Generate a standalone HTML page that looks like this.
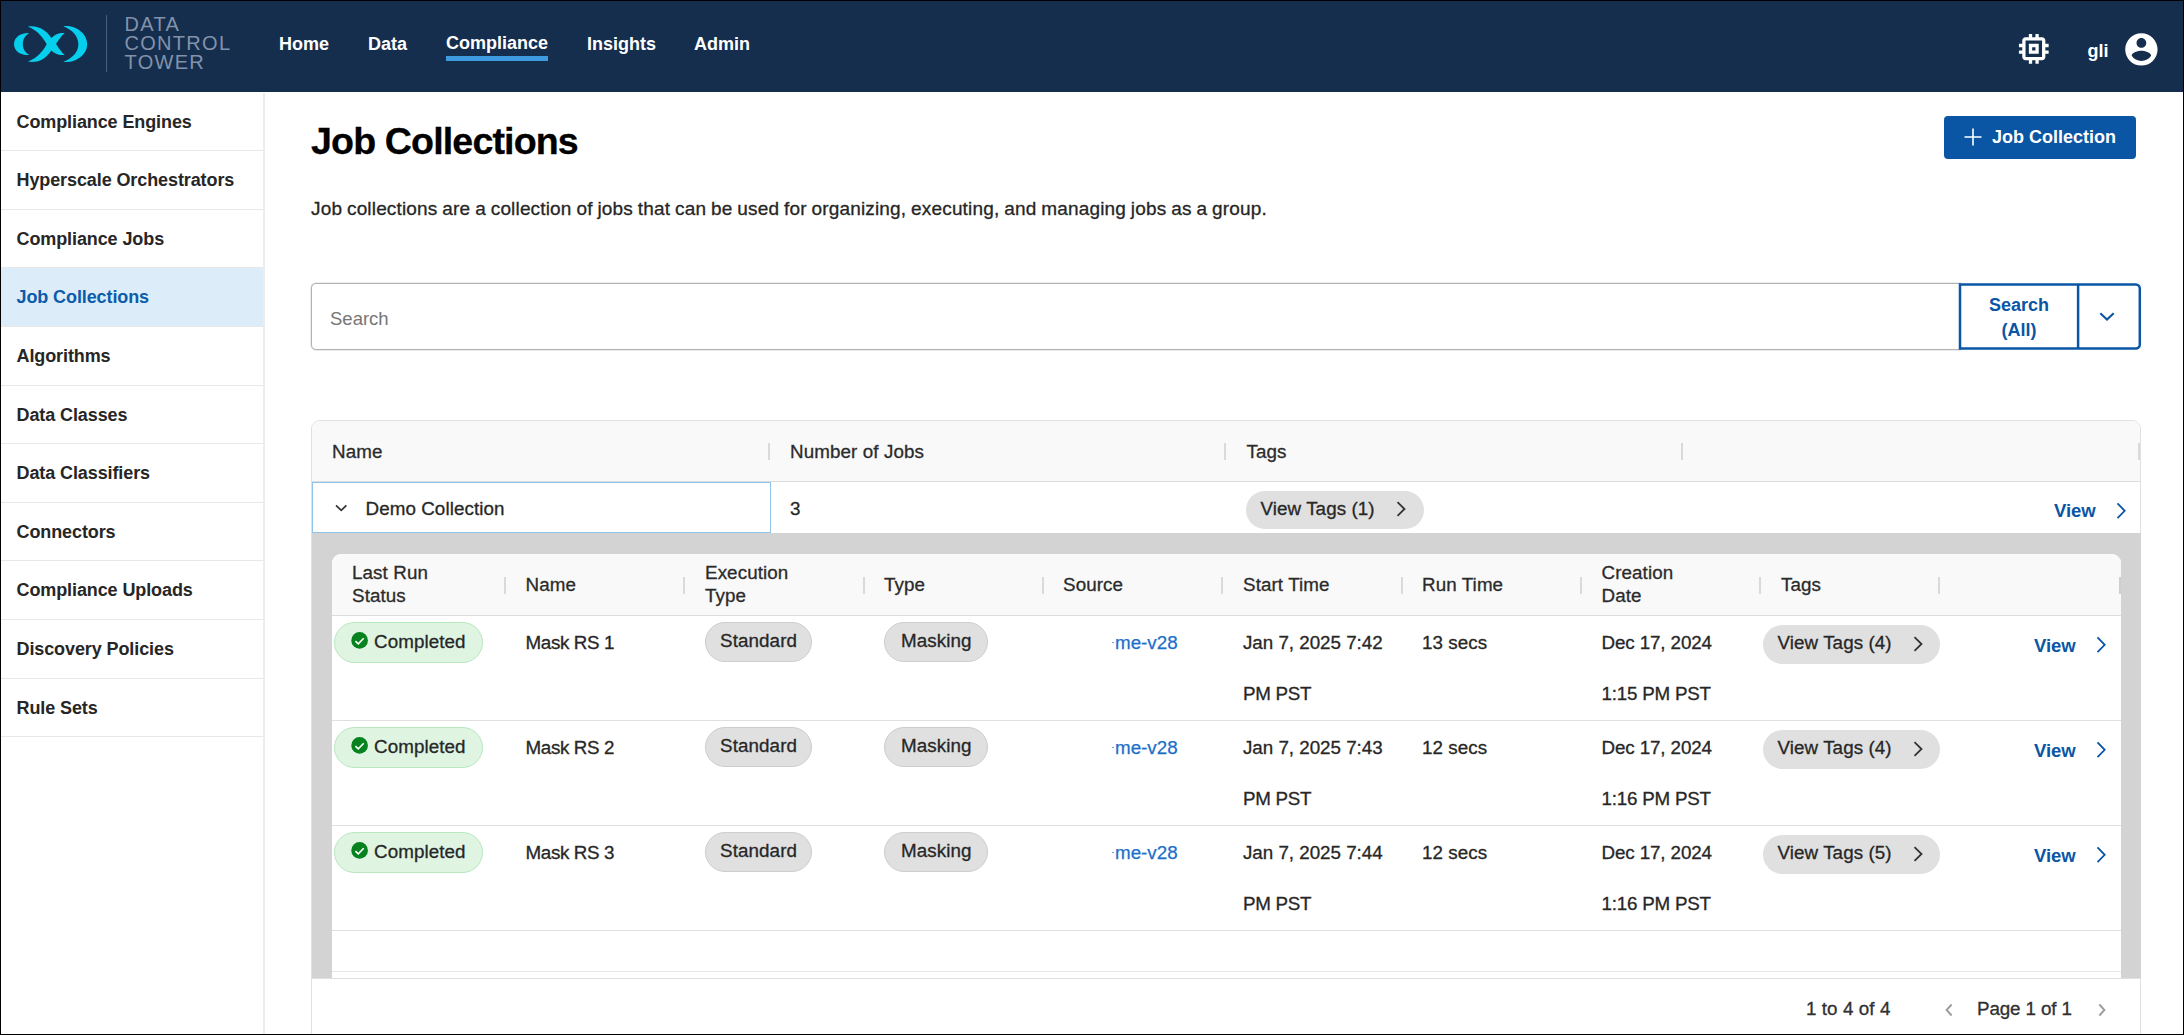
<!DOCTYPE html>
<html>
<head>
<meta charset="utf-8">
<title>Job Collections</title>
<style>
*{box-sizing:border-box;margin:0;padding:0}
html,body{width:2184px;height:1035px;overflow:hidden;background:#fff;font-family:"Liberation Sans",sans-serif}
body{font-family:"Liberation Sans",sans-serif;color:#222;position:relative;font-size:19px}
.abs{position:absolute}
.t{position:absolute;white-space:nowrap;line-height:1}
#frame{position:absolute;left:0;top:0;width:2184px;height:1035px;border:1px solid #000;z-index:100;pointer-events:none}
/* header */
#hdr{position:absolute;left:0;top:0;width:2184px;height:91.5px;background:#152e4e}
.nav{position:absolute;top:34px;color:#fff;font-weight:700;font-size:18px;line-height:20px;white-space:nowrap}
.brand{position:absolute;left:124.5px;color:#8292aa;font-size:20px;letter-spacing:1.3px;line-height:19px;white-space:nowrap}
/* sidebar */
#side{position:absolute;left:0;top:92.7px;width:264.5px;height:944px;border-right:2px solid #ececec;background:#fff}
.si{position:absolute;left:0;width:262.5px;height:58.6px;border-bottom:1.5px solid #e8e8e8;font-weight:700;font-size:18px;line-height:58.6px;padding-left:16.5px;color:#262626;letter-spacing:-0.1px;white-space:nowrap}
.si.act{background:#dcedf9;color:#0b5cab}

/* main */
#title{position:absolute;left:311px;top:118.8px;font-weight:700;font-size:37.6px;line-height:44px;letter-spacing:-0.86px;color:#000;white-space:nowrap;-webkit-text-stroke:0.3px #000}
#addbtn{position:absolute;left:1944px;top:116px;width:192px;height:42.5px;background:#0b55a5;border-radius:4px;color:#fff;font-weight:700;font-size:18px}
#desc{position:absolute;left:311px;top:198px;font-size:19px;line-height:22px;color:#262626;white-space:nowrap;letter-spacing:0.165px;word-spacing:-0.6px;-webkit-text-stroke:0.3px #262626}
#sbox{position:absolute;left:311px;top:283px;width:1650px;height:66.6px;border:1px solid #b2b2b2;border-radius:5px 0 0 5px;background:#fff;box-shadow:0 0 0 0.5px #d9d9d9}
#sph{position:absolute;left:330px;top:307.5px;font-size:18.5px;line-height:22px;color:#767676;white-space:nowrap}
#sbtn{position:absolute;left:1958.8px;top:283.2px;width:120.5px;height:66.6px;color:#0b55a5;font-weight:700;font-size:18px;line-height:25px;text-align:center;padding-top:10px}


/* outer table */
#tbl{position:absolute;left:311px;top:419.5px;width:1830px;height:640px;border:1px solid #e0e0e0;border-radius:9px;background:#fff;overflow:hidden}
#thead{position:absolute;left:0;top:0;width:100%;height:61.5px;background:#f9f9f9;border-bottom:1.5px solid #dddddd}
.hsep{position:absolute;width:2px;background:#dadada}
.ht{position:absolute;white-space:nowrap;font-size:18.8px;line-height:22.5px;color:#2b2b2b;letter-spacing:0.1px;-webkit-text-stroke:0.3px #2b2b2b}
.ct{position:absolute;white-space:nowrap;font-size:18.8px;line-height:22px;color:#272727;letter-spacing:0.08px;-webkit-text-stroke:0.3px #272727}
.pill{position:absolute;border-radius:20px;background:#e0e0e0;white-space:nowrap;font-size:18.8px;color:#222}
.view{position:absolute;white-space:nowrap;font-weight:700;font-size:18.5px;margin-left:-0.6px;line-height:22px;color:#0b55a5}
#detail{position:absolute;left:312px;top:533px;width:1828.6px;height:445px;background:#d3d3d3}
#inner{position:absolute;left:332px;top:554px;width:1788.7px;height:424px;background:#fff;border-radius:9px 9px 0 0;overflow:hidden}
#ihead{position:absolute;left:0;top:0;width:100%;height:62px;background:#f9f9f9;border-bottom:1.5px solid #dddddd}
.rline{position:absolute;left:0;width:100%;height:1px;background:#dfdfdf}
.ok{position:absolute;border-radius:21px;background:#dff5e2;border:1px solid #b7e8be;height:41px}
.gp{position:absolute;border-radius:21px;background:#e0e0e0;border:1px solid #cdcdcd;height:40.6px;text-align:center;font-size:18.8px;line-height:36.9px;color:#272727;letter-spacing:0.1px;-webkit-text-stroke:0.3px #272727}
.lnk{position:absolute;white-space:nowrap;font-size:18.8px;line-height:22px;color:#1c6fc9;-webkit-text-stroke:0.25px #1c6fc9}
#foot{position:absolute;left:312px;top:978px;width:1828px;height:58px;background:#fff;border-top:1px solid #e0e0e0}
</style>
</head>
<body>
<div id="hdr">
  <!-- logo -->
  <svg class="abs" style="left:8px;top:18px" width="90" height="52" viewBox="0 0 1791 1035">
    <g fill="#06cfee">
      <path d="M420 300 C330 282 120 340 120 520 C120 700 330 752 425 735 C340 690 295 610 295 520 C295 430 340 350 420 300 Z"/>
      <path d="M395 168 C600 135 770 240 870 410 L960 520 C1010 600 1070 690 1130 735 C1010 750 910 700 850 630 L770 520 C700 400 600 250 395 168 Z"/>
      <path d="M1130 300 C1000 285 910 340 850 420 L770 520 C700 650 590 790 395 868 C600 905 770 800 870 630 L960 510 C1010 430 1060 360 1130 300 Z"/>
      <path d="M1100 165 C1300 130 1575 280 1575 520 C1575 760 1300 905 1100 870 C1280 800 1400 680 1400 520 C1400 360 1280 235 1100 165 Z"/>
    </g>
  </svg>
  <div class="abs" style="left:105.5px;top:15px;width:1.5px;height:57px;background:#4a5d7a"></div>
  <div class="brand" style="top:14.8px">DATA</div>
  <div class="brand" style="top:34px">CONTROL</div>
  <div class="brand" style="top:53.3px">TOWER</div>
  <div class="nav" style="left:279px">Home</div>
  <div class="nav" style="left:368px">Data</div>
  <div class="nav" style="left:446px;top:33px">Compliance</div>
  <div class="abs" style="left:446px;top:55.8px;width:102px;height:5px;background:#3f9be0"></div>
  <div class="nav" style="left:587px">Insights</div>
  <div class="nav" style="left:694px">Admin</div>
  <!-- chip icon -->
  <svg class="abs" style="left:2013.55px;top:29.05px" width="39.6" height="39.6" viewBox="0 0 24 24" fill="#fff"><path d="M15 9H9v6h6V9zm-2 4h-2v-2h2v2zm8-2V9h-2V7c0-1.1-.9-2-2-2h-2V3h-2v2h-2V3H9v2H7c-1.1 0-2 .9-2 2v2H3v2h2v2H3v2h2v2c0 1.1.9 2 2 2h2v2h2v-2h2v2h2v-2h2c1.1 0 2-.9 2-2v-2h2v-2h-2v-2h2zm-4 6H7V7h10v10z"/></svg>
  <div class="nav" style="left:2087.5px;top:41.2px;font-size:18px">gli</div>
  <!-- avatar -->
  <svg class="abs" style="left:2122.4px;top:29.65px" width="38.8" height="38.8" viewBox="0 0 24 24" fill="#fff"><path d="M12 2C6.48 2 2 6.48 2 12s4.48 10 10 10 10-4.48 10-10S17.52 2 12 2zm0 3c1.66 0 3 1.34 3 3s-1.34 3-3 3-3-1.34-3-3 1.34-3 3-3zm0 14.2c-2.5 0-4.71-1.28-6-3.22.03-1.99 4-3.08 6-3.08 1.99 0 5.97 1.09 6 3.08-1.29 1.94-3.5 3.22-6 3.22z"/></svg>
</div>

<div id="side">
  <div class="si" style="top:0">Compliance Engines</div>
  <div class="si" style="top:58.6px">Hyperscale Orchestrators</div>
  <div class="si" style="top:117.2px">Compliance Jobs</div>
  <div class="si act" style="top:175.8px">Job Collections</div>
  <div class="si" style="top:234.4px">Algorithms</div>
  <div class="si" style="top:293px">Data Classes</div>
  <div class="si" style="top:351.6px">Data Classifiers</div>
  <div class="si" style="top:410.2px">Connectors</div>
  <div class="si" style="top:468.8px">Compliance Uploads</div>
  <div class="si" style="top:527.4px">Discovery Policies</div>
  <div class="si" style="top:586px">Rule Sets</div>
</div>

<div id="main">
  <div id="title">Job Collections</div>
  <div id="addbtn">
    <svg class="abs" style="left:19px;top:11px" width="20" height="20" viewBox="0 0 20 20" stroke="#fff" stroke-width="1.6" fill="none"><path d="M10 1.5v17M1.5 10h17"/></svg>
    <div class="t" style="left:48px;top:11.5px;font-size:18px">Job Collection</div>
  </div>
  <div id="desc">Job collections are a collection of jobs that can be used for organizing, executing, and managing jobs as a group.</div>
  <div id="sbox"></div>
  <div id="sph">Search</div>
  
  <svg class="abs" style="left:1955px;top:280px" width="190" height="74" viewBox="1955 280 190 74" fill="none" stroke="#0b55a5">
    <path d="M1960 284.5 H2135.8 a4 4 0 0 1 4 4 V344.6 a4 4 0 0 1 -4 4 H1960 Z" stroke-width="2.5" fill="#fff"/>
    <path d="M2078.1 284.5 V348.6" stroke-width="2.5"/>
    <path d="M2100.3 313.2 l6.7 6.4 6.7-6.4" stroke-width="2.1"/>
  </svg>
  <div id="sbtn">Search<br>(All)</div>
  <div id="tbl"><div id="thead"></div></div>
  <div class="hsep" style="left:767.5px;top:443px;height:17px"></div>
  <div class="hsep" style="left:1224px;top:443px;height:17px"></div>
  <div class="hsep" style="left:1681px;top:443px;height:17px"></div>
  <div class="hsep" style="left:2137.5px;top:443px;height:17px"></div>
  <div class="ht" style="left:332px;top:440.8px">Name</div>
  <div class="ht" style="left:790px;top:440.8px">Number of Jobs</div>
  <div class="ht" style="left:1246.5px;top:440.8px">Tags</div>
  <div class="abs" style="left:312px;top:482px;width:458.5px;height:51px;border:1.5px solid #8fc4ec;background:#fff"></div>
  <svg class="abs" style="left:333px;top:502px" width="16" height="12" viewBox="0 0 16 12" fill="none" stroke="#333" stroke-width="1.7"><path d="M3 3.4l5.2 5 5.2-5"/></svg>
  <div class="ct" style="left:365.5px;top:497.9px">Demo Collection</div>
  <div class="ct" style="left:790px;top:497.9px">3</div>
  <div class="pill" style="left:1246px;top:491px;width:178px;height:38px"></div>
  <div class="ct" style="left:1260.5px;top:497.8px">View Tags (1)</div>
  <svg class="abs" style="left:1394px;top:500px" width="14" height="18" viewBox="0 0 14 18" fill="none" stroke="#333" stroke-width="1.8"><path d="M3.5 2.2l7 6.8-7 6.8"/></svg>
  <div class="view" style="left:2054.5px;top:500px">View</div>
  <svg class="abs" style="left:2114px;top:501px" width="14" height="20" viewBox="0 0 14 20" fill="none" stroke="#0b55a5" stroke-width="1.8"><path d="M3.5 2.4l7.2 7.4-7.2 7.4"/></svg>
  <div id="detail"></div>
  <div id="inner"><div id="ihead"></div>
  <div class="rline" style="top:166px"></div>
  <div class="rline" style="top:271px"></div>
  <div class="rline" style="top:376px"></div>
  <div class="rline" style="top:417px;background:#e7e7e7"></div>
  </div>
  <div class="hsep" style="left:503.7px;top:576.6px;height:17px"></div>
  <div class="hsep" style="left:683.3px;top:576.6px;height:17px"></div>
  <div class="hsep" style="left:862.6px;top:576.6px;height:17px"></div>
  <div class="hsep" style="left:1041.9px;top:576.6px;height:17px"></div>
  <div class="hsep" style="left:1221.3px;top:576.6px;height:17px"></div>
  <div class="hsep" style="left:1400.5px;top:576.6px;height:17px"></div>
  <div class="hsep" style="left:1580px;top:576.6px;height:17px"></div>
  <div class="hsep" style="left:1759.2px;top:576.6px;height:17px"></div>
  <div class="hsep" style="left:1938.4px;top:576.6px;height:17px"></div>
  <div class="hsep" style="left:2118.5px;top:576.6px;height:17px;background:#cfcfcf"></div>
  <div class="ht" style="left:352px;top:562px">Last Run<br>Status</div>
  <div class="ht" style="left:705px;top:562px">Execution<br>Type</div>
  <div class="ht" style="left:1601.5px;top:562px">Creation<br>Date</div>
  <div class="ht" style="left:525.5px;top:573.5px">Name</div>
  <div class="ht" style="left:884px;top:573.5px">Type</div>
  <div class="ht" style="left:1063px;top:573.5px">Source</div>
  <div class="ht" style="left:1243px;top:573.5px">Start Time</div>
  <div class="ht" style="left:1422px;top:573.5px">Run Time</div>
  <div class="ht" style="left:1781px;top:573.5px">Tags</div>
  <div class="ok" style="left:334px;top:621.5px;width:148.6px"></div>
  <svg class="abs" style="left:350.5px;top:632px" width="17" height="17" viewBox="0 0 17 17"><circle cx="8.6" cy="8.4" r="8.3" fill="#06821f"/><path d="M4.4 9.1L7.3 11.9L12.7 6.2" fill="none" stroke="#fff" stroke-width="1.6"/></svg>
  <div class="ct" style="left:374px;top:630.5px">Completed</div>
  <div class="ct" style="left:525.5px;top:632px;letter-spacing:-0.35px">Mask RS 1</div>
  <div class="gp" style="left:704.8px;top:621.8px;width:107.5px">Standard</div>
  <div class="gp" style="left:884.2px;top:621.8px;width:104.2px">Masking</div>
  <div class="abs" style="left:1112px;top:642.3px;width:2px;height:1px;background:#6ea3dc"></div>
  <div class="lnk" style="left:1115px;top:632px">me-v28</div>
  <div class="ct" style="left:1243px;top:632px;letter-spacing:-0.02px">Jan 7, 2025 7:42</div>
  <div class="ct" style="left:1243px;top:683.3px;letter-spacing:-0.3px">PM PST</div>
  <div class="ct" style="left:1422px;top:632px">13 secs</div>
  <div class="ct" style="left:1601.5px;top:632px;letter-spacing:-0.11px">Dec 17, 2024</div>
  <div class="ct" style="left:1601.5px;top:683.3px;letter-spacing:-0.22px">1:15 PM PST</div>
  <div class="pill" style="left:1763px;top:625.2px;width:176.5px;height:38.6px"></div>
  <div class="ct" style="left:1777.5px;top:632px">View Tags (4)</div>
  <svg class="abs" style="left:1911px;top:635px" width="14" height="18" viewBox="0 0 14 18" fill="none" stroke="#333" stroke-width="1.8"><path d="M3.5 2.2l7 6.8-7 6.8"/></svg>
  <div class="view" style="left:2034.5px;top:634.5px">View</div>
  <svg class="abs" style="left:2093.5px;top:635px" width="14" height="20" viewBox="0 0 14 20" fill="none" stroke="#0b55a5" stroke-width="1.8"><path d="M3.5 2.4l7.2 7.4-7.2 7.4"/></svg>
  <div class="ok" style="left:334px;top:726.5px;width:148.6px"></div>
  <svg class="abs" style="left:350.5px;top:737px" width="17" height="17" viewBox="0 0 17 17"><circle cx="8.6" cy="8.4" r="8.3" fill="#06821f"/><path d="M4.4 9.1L7.3 11.9L12.7 6.2" fill="none" stroke="#fff" stroke-width="1.6"/></svg>
  <div class="ct" style="left:374px;top:735.5px">Completed</div>
  <div class="ct" style="left:525.5px;top:737px;letter-spacing:-0.35px">Mask RS 2</div>
  <div class="gp" style="left:704.8px;top:726.8px;width:107.5px">Standard</div>
  <div class="gp" style="left:884.2px;top:726.8px;width:104.2px">Masking</div>
  <div class="abs" style="left:1112px;top:747.3px;width:2px;height:1px;background:#6ea3dc"></div>
  <div class="lnk" style="left:1115px;top:737px">me-v28</div>
  <div class="ct" style="left:1243px;top:737px;letter-spacing:-0.02px">Jan 7, 2025 7:43</div>
  <div class="ct" style="left:1243px;top:788.3px;letter-spacing:-0.3px">PM PST</div>
  <div class="ct" style="left:1422px;top:737px">12 secs</div>
  <div class="ct" style="left:1601.5px;top:737px;letter-spacing:-0.11px">Dec 17, 2024</div>
  <div class="ct" style="left:1601.5px;top:788.3px;letter-spacing:-0.22px">1:16 PM PST</div>
  <div class="pill" style="left:1763px;top:730.2px;width:176.5px;height:38.6px"></div>
  <div class="ct" style="left:1777.5px;top:737px">View Tags (4)</div>
  <svg class="abs" style="left:1911px;top:740px" width="14" height="18" viewBox="0 0 14 18" fill="none" stroke="#333" stroke-width="1.8"><path d="M3.5 2.2l7 6.8-7 6.8"/></svg>
  <div class="view" style="left:2034.5px;top:739.5px">View</div>
  <svg class="abs" style="left:2093.5px;top:740px" width="14" height="20" viewBox="0 0 14 20" fill="none" stroke="#0b55a5" stroke-width="1.8"><path d="M3.5 2.4l7.2 7.4-7.2 7.4"/></svg>
  <div class="ok" style="left:334px;top:831.5px;width:148.6px"></div>
  <svg class="abs" style="left:350.5px;top:842px" width="17" height="17" viewBox="0 0 17 17"><circle cx="8.6" cy="8.4" r="8.3" fill="#06821f"/><path d="M4.4 9.1L7.3 11.9L12.7 6.2" fill="none" stroke="#fff" stroke-width="1.6"/></svg>
  <div class="ct" style="left:374px;top:840.5px">Completed</div>
  <div class="ct" style="left:525.5px;top:842px;letter-spacing:-0.35px">Mask RS 3</div>
  <div class="gp" style="left:704.8px;top:831.8px;width:107.5px">Standard</div>
  <div class="gp" style="left:884.2px;top:831.8px;width:104.2px">Masking</div>
  <div class="abs" style="left:1112px;top:852.3px;width:2px;height:1px;background:#6ea3dc"></div>
  <div class="lnk" style="left:1115px;top:842px">me-v28</div>
  <div class="ct" style="left:1243px;top:842px;letter-spacing:-0.02px">Jan 7, 2025 7:44</div>
  <div class="ct" style="left:1243px;top:893.3px;letter-spacing:-0.3px">PM PST</div>
  <div class="ct" style="left:1422px;top:842px">12 secs</div>
  <div class="ct" style="left:1601.5px;top:842px;letter-spacing:-0.11px">Dec 17, 2024</div>
  <div class="ct" style="left:1601.5px;top:893.3px;letter-spacing:-0.22px">1:16 PM PST</div>
  <div class="pill" style="left:1763px;top:835.2px;width:176.5px;height:38.6px"></div>
  <div class="ct" style="left:1777.5px;top:842px">View Tags (5)</div>
  <svg class="abs" style="left:1911px;top:845px" width="14" height="18" viewBox="0 0 14 18" fill="none" stroke="#333" stroke-width="1.8"><path d="M3.5 2.2l7 6.8-7 6.8"/></svg>
  <div class="view" style="left:2034.5px;top:844.5px">View</div>
  <svg class="abs" style="left:2093.5px;top:845px" width="14" height="20" viewBox="0 0 14 20" fill="none" stroke="#0b55a5" stroke-width="1.8"><path d="M3.5 2.4l7.2 7.4-7.2 7.4"/></svg>
  <div id="foot"></div>
  <div class="ct" style="left:1806px;top:997.8px;color:#333">1 to 4 of 4</div>
  <svg class="abs" style="left:1942.5px;top:1001.5px" width="12" height="16" viewBox="0 0 12 16" fill="none" stroke="#9c9c9c" stroke-width="1.9"><path d="M8.6 2.5L3.6 8l5 5.5"/></svg>
  <div class="ct" style="left:1977px;top:997.8px;color:#333;letter-spacing:-0.12px">Page 1 of 1</div>
  <svg class="abs" style="left:2095.5px;top:1001.5px" width="12" height="16" viewBox="0 0 12 16" fill="none" stroke="#9c9c9c" stroke-width="1.9"><path d="M3.4 2.5L8.4 8l-5 5.5"/></svg>
</div>
<div id="frame"></div>
</body>
</html>
